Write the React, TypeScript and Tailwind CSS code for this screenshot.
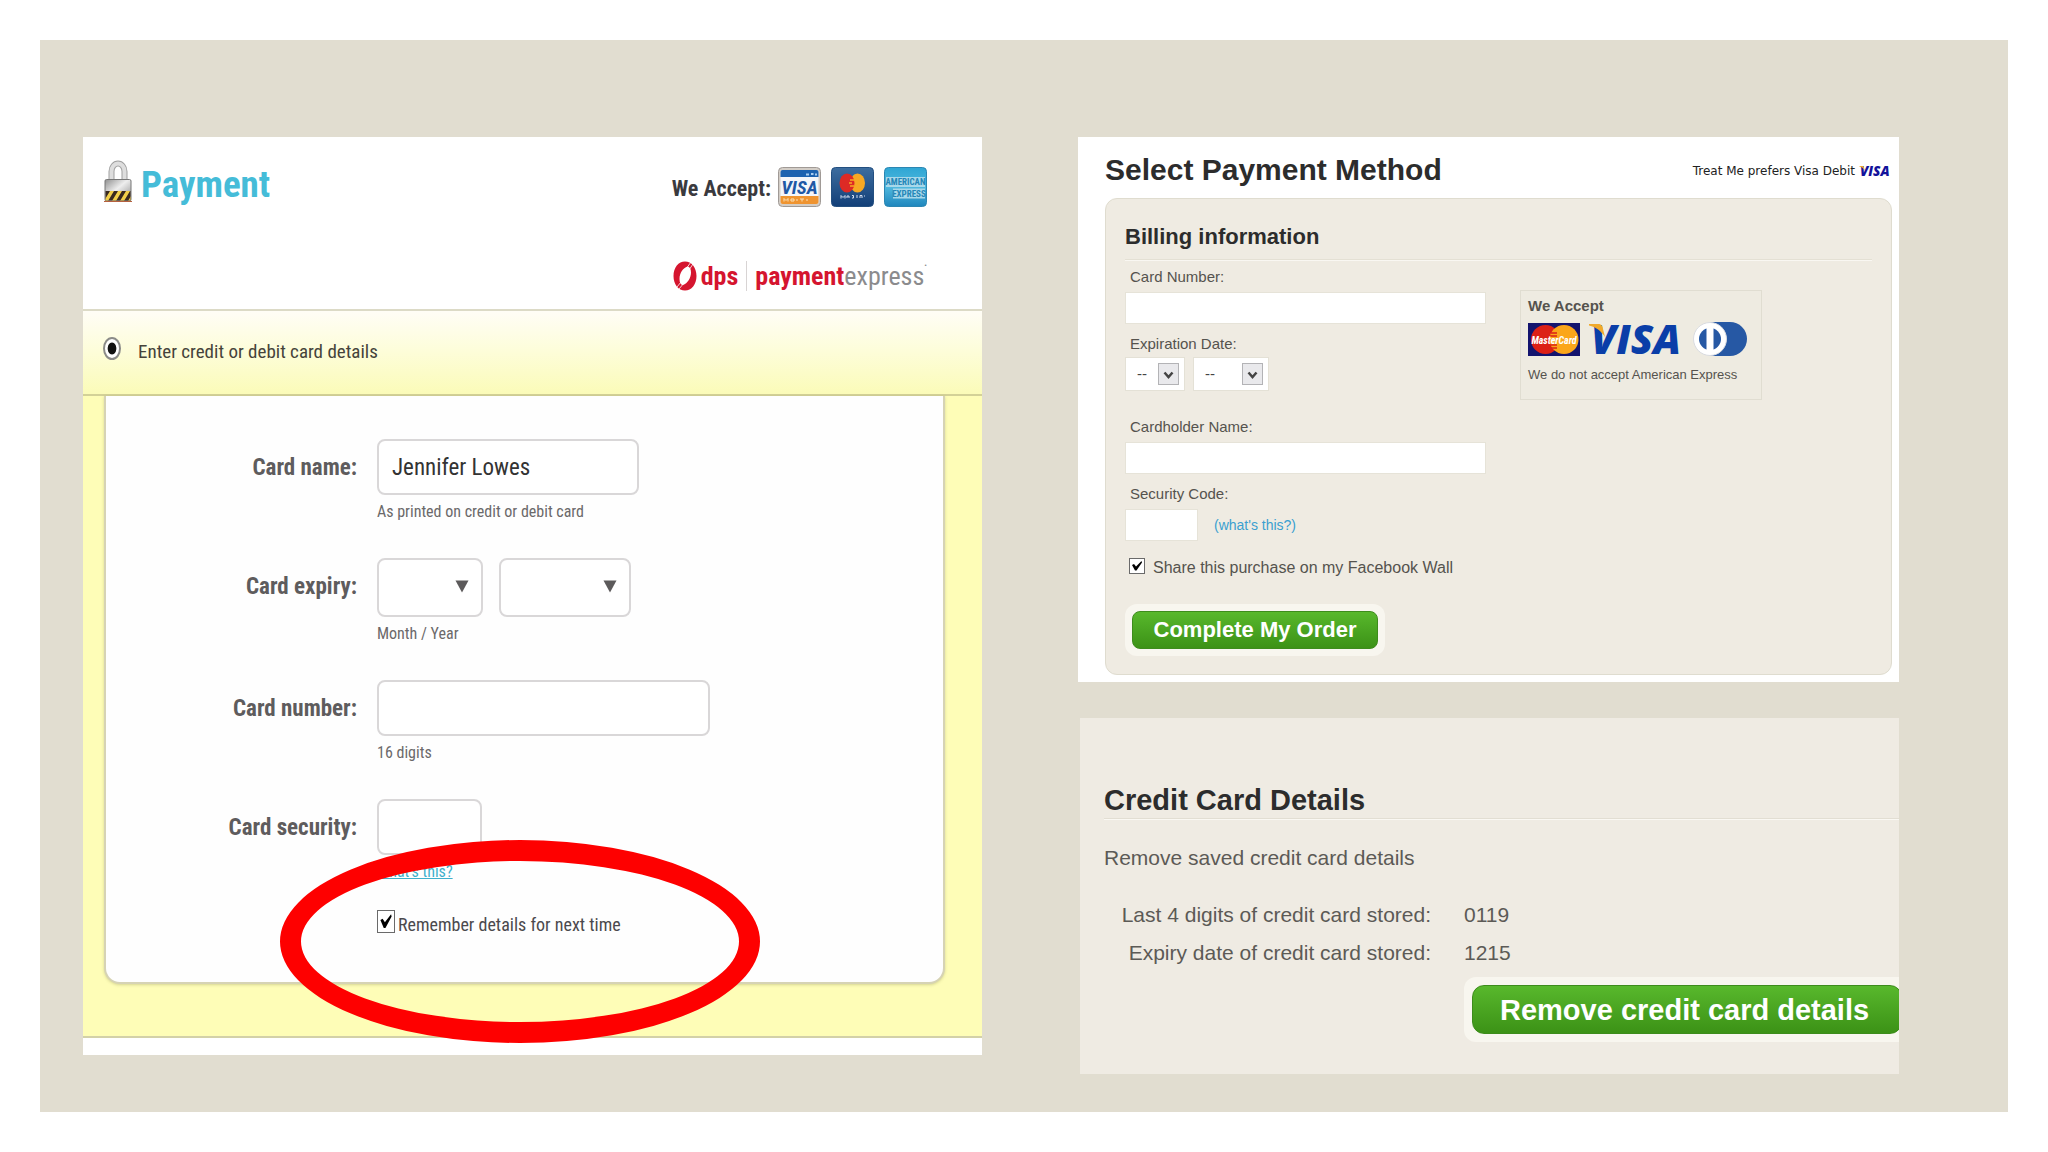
import React, { useState } from 'react'
import type { ReactNode } from 'react'

const narrow = "font-['Roboto_Condensed','Arial_Narrow','Liberation_Sans',sans-serif]"
const sans = "font-['Liberation_Sans',Arial,sans-serif]"

/* ---------- drawings ---------- */

function PadlockIcon() {
  return (
    <svg width="28" height="42" viewBox="0 0 28 42" aria-hidden="true">
      <defs>
        <linearGradient id="lockBody" x1="0" y1="0" x2="1" y2="1">
          <stop offset="0" stopColor="#8f8f8f" />
          <stop offset="0.45" stopColor="#eeeeee" />
          <stop offset="1" stopColor="#8a8a8a" />
        </linearGradient>
        <clipPath id="lockStripe">
          <rect x="1.5" y="31" width="25" height="9.5" />
        </clipPath>
      </defs>
      <path d="M7.500 22V11.500a6.500 8 0 0 1 13 0V22" fill="none" stroke="#a0a0a0" strokeWidth="6" />
      <path d="M7.500 22V11.500a6.500 8 0 0 1 13 0V22" fill="none" stroke="#dedede" strokeWidth="4" />
      <rect x="1" y="19.500" width="26" height="21.500" rx="1.500" fill="url(#lockBody)" stroke="#777" />
      <g clipPath="url(#lockStripe)">
        <rect x="1" y="31" width="26" height="10" fill="#3a2a20" />
        <path d="M0 41L6 31h4L4 41zM8 41l6-10h4l-6 10zM16 41l6-10h4l-6 10zM24 41l6-10h4l-6 10z" fill="#f2cf4a" />
      </g>
      <path d="M0 41.500h28" stroke="#b5603f" />
    </svg>
  )
}

function VisaCard() {
  return (
    <svg width="43" height="40" viewBox="0 0 43 40" role="img" aria-label="Visa">
      <defs>
        <clipPath id="visaClip">
          <rect x="2.500" y="3" width="38" height="34" rx="2" />
        </clipPath>
      </defs>
      <rect x="0.500" y="0.500" width="42" height="39" rx="4" fill="#d3cdc6" stroke="#a09a96" />
      <g clipPath="url(#visaClip)">
        <rect x="2" y="3" width="39" height="34" fill="#f4f6fa" />
        <rect x="2" y="3" width="39" height="7" fill="#1c62b0" />
        <rect x="2" y="29" width="39" height="8" fill="#ef9430" />
      </g>
      <path d="M28 7.500h3M33 7h2.500M37 7.500h2" stroke="#a9cdf0" strokeWidth="2" />
      <path d="M6 34.500v-3l2 2 2-2v3M13 34v-2h3v2zM19 34v-2M22 32h4M24 32v2.500M29 34v-2" stroke="#fbe0b4" fill="none" />
      <text x="21.500" y="27" textAnchor="middle" fontFamily="Roboto Condensed" fontWeight="700" fontStyle="italic" fontSize="19" fill="#2058a5">
        VISA
      </text>
    </svg>
  )
}

function MaestroCard() {
  return (
    <svg width="43" height="40" viewBox="0 0 43 40" role="img" aria-label="Mastercard">
      <defs>
        <linearGradient id="mcBlue" x1="0" y1="0" x2="0" y2="1">
          <stop offset="0" stopColor="#3d6d9f" />
          <stop offset="1" stopColor="#123f78" />
        </linearGradient>
      </defs>
      <rect x="0.500" y="0.500" width="42" height="39" rx="4" fill="url(#mcBlue)" stroke="#234f80" />
      <ellipse cx="26.500" cy="16" rx="7.500" ry="9.500" fill="#f7a823" />
      <ellipse cx="16" cy="16" rx="7.500" ry="9.500" fill="#dd2a25" />
      <path d="M19 13h4M18 16h3M19 19h4" stroke="#f7a823" strokeWidth="1.500" />
      <path d="M10 31.500v-3l2 2 2-2v3M16 31v-2h2v2M21 31h1.500v-2.500H21M26 31v-3M29 31v-2.500h2V31M33 29h1" stroke="#d3def0" fill="none" />
    </svg>
  )
}

function AmexCard() {
  return (
    <svg width="43" height="40" viewBox="0 0 43 40" role="img" aria-label="American Express">
      <defs>
        <linearGradient id="amexBlue" x1="0" y1="0" x2="0" y2="1">
          <stop offset="0" stopColor="#2fa6d4" />
          <stop offset="0.5" stopColor="#4fb8de" />
          <stop offset="1" stopColor="#1f86bd" />
        </linearGradient>
      </defs>
      <rect x="0.500" y="0.500" width="42" height="39" rx="4" fill="url(#amexBlue)" stroke="#2c86b2" />
      <rect x="2" y="10" width="39" height="10" fill="#a7d8ea" />
      <rect x="9" y="21.500" width="32" height="10" fill="#a7d8ea" />
      <text x="21.500" y="18" textAnchor="middle" fontFamily="Roboto Condensed" fontWeight="700" fontSize="9" fill="#2587b8">
        AMERICAN
      </text>
      <text x="25" y="30" textAnchor="middle" fontFamily="Roboto Condensed" fontWeight="700" fontSize="9" fill="#2587b8">
        EXPRESS
      </text>
    </svg>
  )
}

function DpsMark() {
  return (
    <svg width="24" height="30" viewBox="0 0 24 30" aria-hidden="true">
      <path
        fillRule="evenodd"
        d="M12 0.500C18.500 0.500 23.500 6.500 23.500 15S18.500 29.500 12 29.500 0.500 23.500 0.500 15 5.500 0.500 12 0.500zM14.500 5.500C10 7 6.500 12 6.500 18c0 4 1.500 6 3.500 6 4.500-1.500 8-7 8-12.500 0-4-1.500-6-3.500-6z"
        fill="#d5152f"
      />
      <path d="M13 8l5-7M16 9l4-6M11 22l-5 6M8 21l-4 5" stroke="#fff" strokeWidth="0.800" />
    </svg>
  )
}

function VisaWordmark({ large = false }: { large?: boolean }) {
  return (
    <svg
      className={large ? 'h-[36px] w-[97px]' : 'h-[12px] w-[32px]'}
      viewBox="0 0 97 36"
      role="img"
      aria-label="Visa"
    >
      <text x="3" y="33" fontFamily="Open Sans" fontWeight="800" fontStyle="italic" fontSize="41" fill={large ? '#0a3ea8' : '#12129a'}>
        VISA
      </text>
      <path d="M1 3h9c3 0 5 2 5 5l2 8C13 10 8 6 1 4.500z" fill="#f0a92c" />
    </svg>
  )
}

function MasterCardLogo() {
  return (
    <svg width="52" height="33" viewBox="0 0 52 33" role="img" aria-label="MasterCard">
      <rect width="52" height="33" fill="#13146e" />
      <circle cx="17.500" cy="16.500" r="14.500" fill="#dc2016" />
      <circle cx="36" cy="16.500" r="14.500" fill="#fba61a" />
      <path d="M23 10h6M22 13h7M22 22h7M23 25h6" stroke="#dc2016" strokeWidth="1.500" />
      <text x="26" y="20.500" textAnchor="middle" fontFamily="Roboto Condensed" fontWeight="700" fontStyle="italic" fontSize="10" fill="#fff">
        MasterCard
      </text>
    </svg>
  )
}

function DinersLogo() {
  return (
    <svg width="55" height="36" viewBox="0 0 55 36" role="img" aria-label="Diners Club">
      <path d="M17 1h20a17 17 0 0 1 0 34H17z" fill="#2658a4" />
      <circle cx="17" cy="18" r="16.500" fill="#fff" stroke="#d9dbe0" />
      <circle cx="17" cy="18" r="11" fill="#2658a4" />
      <rect x="13.500" y="6" width="7" height="24" fill="#fff" />
    </svg>
  )
}

/* ---------- controls ---------- */

function TickBox({ id, size }: { id: string; size: string }) {
  const [on, setOn] = useState(true)
  return (
    <span className={`relative inline-block shrink-0 ${size}`}>
      <input
        id={id}
        type="checkbox"
        checked={on}
        onChange={(e) => setOn(e.target.checked)}
        className="block h-full w-full appearance-none border border-[#6a6a6a] bg-white"
      />
      {on && (
        <svg className="pointer-events-none absolute inset-0 h-full w-full" viewBox="0 0 16 16" preserveAspectRatio="none" aria-hidden="true">
          <path d="M3 7l2-1 2 2.500L12.500 3l.5 1.500L7.500 12.500H6z" fill="#000" />
        </svg>
      )}
    </span>
  )
}

function ArrowSelect({ id, label, width }: { id: string; label: string; width: string }) {
  return (
    <span className={`relative inline-block ${width}`}>
      <select id={id} aria-label={label} className="block h-[59px] w-full appearance-none rounded-lg border-2 border-[#d9d7d8] bg-white px-3 text-[23px]">
        <option value=""></option>
      </select>
      <svg className="pointer-events-none absolute top-[22px] right-[14px]" width="14" height="13" viewBox="0 0 14 13" aria-hidden="true">
        <path d="M0.500 0.500h13L7 12.500z" fill="#5c5a5b" />
      </svg>
    </span>
  )
}

function DashSelect({ id, label, width }: { id: string; label: string; width: string }) {
  return (
    <span className={`relative inline-block ${width}`}>
      <select id={id} aria-label={label} className="block h-[34px] w-full appearance-none border border-[#e4e1d6] bg-white pl-[11px] text-[15px] text-[#444]">
        <option value="">--</option>
      </select>
      <svg className="pointer-events-none absolute top-[6px] right-[6px]" width="21" height="22" viewBox="0 0 21 22" aria-hidden="true">
        <rect x="0.500" y="0.500" width="20" height="21" fill="#e9e9ec" stroke="#b3b3b6" />
        <path d="M6.500 9.500l4 4.500 4-4.500" fill="none" stroke="#444" strokeWidth="2.500" />
      </svg>
    </span>
  )
}

function FieldRow({ id, label, children }: { id: string; label: string; children: ReactNode }) {
  return (
    <div className="grid grid-cols-[251px_1fr] gap-x-5">
      <label htmlFor={id} className="text-right text-[23px] leading-[57px] font-bold text-[#5e5c5d]">
        {label}
      </label>
      <div>{children}</div>
    </div>
  )
}

const bigInput = 'block rounded-lg border-2 border-[#d9d7d8] bg-white px-[13px] text-[23px] text-[#333] h-[56px]'
const help = 'mt-[7px] block text-[16px] leading-5 text-[#6b696a]'
const flatInput = 'block h-8 border border-[#e6e3d8] bg-white px-2 text-[15px]'
const flatLabel = 'block pl-[5px] text-[15px] leading-5 text-[#55534e]'

/* ---------- panels ---------- */

function PaymentPanel() {
  return (
    <section className={`relative self-start bg-white ${narrow}`}>
      <header className="h-[172px] pr-[55px] pl-[21px]">
        <div className="flex items-start justify-between">
          <h1 className="flex items-start gap-[9px] pt-[23px] text-[37px] leading-[46px] font-bold text-[#45bcd8]">
            <PadlockIcon />
            <span className="pt-[2px]">Payment</span>
          </h1>
          <div className="flex items-center pt-[30px]">
            <span className="pt-[3px] pr-[7px] text-[22px] leading-[37px] font-bold text-[#3a3a3e]">We Accept:</span>
            <span className="flex gap-[10px]">
              <VisaCard />
              <MaestroCard />
              <AmexCard />
            </span>
          </div>
        </div>
        <div className="mt-[52px] flex items-center justify-end text-[26px] leading-8">
          <DpsMark />
          <span className="pl-[4px] font-bold text-[#d5152f]">dps</span>
          <span className="mx-[8px] h-[30px] w-px bg-[#d8d4d4]" />
          <span className="font-bold text-[#d5152f]">payment</span>
          <span className="text-[#8b8b8d]">express</span>
          <span className="self-start text-[8px] leading-3 text-[#8b8b8d]">•</span>
        </div>
      </header>

      <div className="border-t-2 border-b-2 border-t-[#dcdac6] border-b-[#d3d197] bg-linear-to-b from-[#fffdf6] via-[#fdfdd8] to-[#fbfbb8]">
        <label className="flex h-[83px] items-center pb-2 pl-5 text-[19px] text-[#45433a]">
          <input
            type="radio"
            name="method"
            defaultChecked
            className="h-[23px] w-[18px] appearance-none rounded-[50%] border-2 border-[#8b8b88] bg-[radial-gradient(ellipse_at_center,#111_0,#111_40%,#fff_48%)]"
          />
          <span className="pt-2 pl-[17px]">Enter credit or debit card details</span>
        </label>
      </div>

      <div className="border-b-2 border-[#d3d1a8] bg-[#fefdb7] pr-[37px] pb-[52px] pl-[21px]">
        <form
          className="rounded-b-2xl border-2 border-t-0 border-[#d6d3b4] bg-[#fefefe] pt-[43px] pb-[45px] shadow-[0_1px_3px_rgba(90,90,40,0.25)]"
          onSubmit={(e) => e.preventDefault()}
        >
          <div className="flex flex-col gap-9">
            <FieldRow id="card-name" label="Card name:">
              <input id="card-name" type="text" defaultValue="Jennifer Lowes" className={`${bigInput} w-[262px]`} />
              <span className={help}>As printed on credit or debit card</span>
            </FieldRow>
            <FieldRow id="card-month" label="Card expiry:">
              <div className="flex gap-4">
                <ArrowSelect id="card-month" label="Expiry month" width="w-[106px]" />
                <ArrowSelect id="card-year" label="Expiry year" width="w-[132px]" />
              </div>
              <span className={help}>Month / Year</span>
            </FieldRow>
            <FieldRow id="card-number" label="Card number:">
              <input id="card-number" type="text" className={`${bigInput} w-[333px]`} />
              <span className={help}>16 digits</span>
            </FieldRow>
            <FieldRow id="card-security" label="Card security:">
              <input id="card-security" type="text" className={`${bigInput} w-[105px]`} />
              <a href="#security" className="mt-[7px] block w-fit text-[16px] leading-5 text-[#3fb0cc] underline">
                What's this?
              </a>
              <div className="mt-[28px] flex items-start">
                <TickBox id="remember" size="h-[23px] w-[18px]" />
                <label htmlFor="remember" className="pt-[3px] pl-[3px] text-[18px] leading-6 text-[#4b494d]">
                  Remember details for next time
                </label>
              </div>
            </FieldRow>
          </div>
        </form>
      </div>
      <div className="h-[17px]" />

      <div className="pointer-events-none absolute top-[703px] left-[197px] h-[203px] w-[480px] rounded-[50%] border-[21px] border-[#fe0000]" />
    </section>
  )
}

function SelectPaymentPanel() {
  return (
    <section className="bg-white pr-[7px] pb-[7px] pl-[27px]">
      <header className="flex h-[61px] items-center justify-between pt-1">
        <h2 className="text-[30px] leading-9 font-bold text-[#2c2c2c]">Select Payment Method</h2>
        <p className="flex items-center gap-1 pt-[3px] pr-[1px] font-['DejaVu_Sans',Verdana,sans-serif] text-[12px] text-[#222]">
          Treat Me prefers Visa Debit
          <VisaWordmark />
        </p>
      </header>
      <form
        className="rounded-xl border border-[#dfdccf] bg-[#efebe2] px-[19px] pt-[26px] pb-[18px]"
        onSubmit={(e) => e.preventDefault()}
      >
        <h3 className="border-b border-[#e4e0d4] pb-[10px] text-[22px] leading-6 font-bold text-[#2c2c2c]">Billing information</h3>
        <div className="flex items-start gap-[34px] border-t border-[#f9f7f2]">
          <div className="w-[361px]">
            <label htmlFor="number" className={`${flatLabel} mt-[6px]`}>Card Number:</label>
            <input id="number" type="text" className={`${flatInput} mt-[5px] w-full`} />
            <label htmlFor="exp-month" className={`${flatLabel} mt-[10px]`}>Expiration Date:</label>
            <div className="mt-[3px] flex gap-2">
              <DashSelect id="exp-month" label="Expiration month" width="w-[60px]" />
              <DashSelect id="exp-year" label="Expiration year" width="w-[76px]" />
            </div>
            <label htmlFor="holder" className={`${flatLabel} mt-[26px]`}>Cardholder Name:</label>
            <input id="holder" type="text" className={`${flatInput} mt-[5px] w-full`} />
            <label htmlFor="code" className={`${flatLabel} mt-[10px]`}>Security Code:</label>
            <div className="mt-[5px] flex items-center gap-4">
              <input id="code" type="text" className={`${flatInput} w-[73px]`} />
              <a href="#code-help" className="text-[14px] text-[#3a9fd0]">(what's this?)</a>
            </div>
            <div className="mt-[13px] flex items-center pl-1">
              <TickBox id="share" size="h-4 w-4" />
              <label htmlFor="share" className="pt-1 pl-[8px] text-[16px] leading-5 whitespace-nowrap text-[#55534e]">
                Share this purchase on my Facebook Wall
              </label>
            </div>
            <div className="mt-[26px] w-fit rounded-xl bg-[#f8f6ef] p-[7px]">
              <button
                type="submit"
                className="block h-[38px] w-[246px] rounded-lg border border-[#3d8c1c] bg-linear-to-b from-[#58b82c] to-[#3c9216] text-[22px] leading-8 font-bold text-white"
              >
                Complete My Order
              </button>
            </div>
          </div>
          <aside className="mt-[29px] h-[110px] w-[242px] border border-[#e0ddd1] bg-[#eeebe1] px-[7px] pt-[5px]">
            <h4 className="text-[15px] leading-5 font-bold text-[#55534e]">We Accept</h4>
            <div className="mt-[5px] flex items-center gap-2">
              <MasterCardLogo />
              <VisaWordmark large />
              <DinersLogo />
            </div>
            <p className="mt-[8px] text-[13px] leading-5 whitespace-nowrap text-[#55534e]">We do not accept American Express</p>
          </aside>
        </div>
      </form>
    </section>
  )
}

function SavedCardPanel() {
  return (
    <section className="mt-9 ml-[2px] overflow-hidden bg-[#efebe3] pt-16 pb-[32px] pl-6">
      <h2 className="border-b border-[#e2ded3] text-[29px] leading-9 font-bold text-[#2c2c2c]">Credit Card Details</h2>
      <p className="border-t border-[#faf8f3] pt-[24px] text-[21px] leading-7 text-[#5c5a56]">Remove saved credit card details</p>
      <table className="mt-[24px] text-[21px] leading-[38px] text-[#5c5a56]">
        <tbody>
          <tr>
            <th scope="row" className="w-[327px] p-0 text-right font-normal">Last 4 digits of credit card stored:</th>
            <td className="p-0 pl-[33px]">0119</td>
          </tr>
          <tr>
            <th scope="row" className="w-[327px] p-0 text-right font-normal">Expiry date of credit card stored:</th>
            <td className="p-0 pl-[33px]">1215</td>
          </tr>
        </tbody>
      </table>
      <div className="mt-[5px] ml-[360px] w-max rounded-xl bg-[#f8f6ef] p-2">
        <button
          type="button"
          className="block h-[49px] w-[430px] rounded-xl border border-[#3d8c1c] bg-linear-to-b from-[#58b82c] to-[#3c9216] pl-[27px] text-left text-[29px] leading-[44px] font-bold whitespace-nowrap text-white"
        >
          Remove credit card details
        </button>
      </div>
    </section>
  )
}

export default function App() {
  return (
    <div className={`flex min-h-screen bg-white p-10 ${sans}`}>
      <main className="grid flex-1 grid-cols-[899fr_821fr] items-start gap-x-24 bg-[#e1ddd0] pt-[97px] pr-[109px] pb-[38px] pl-[43px]">
        <PaymentPanel />
        <div className="min-w-0">
          <SelectPaymentPanel />
          <SavedCardPanel />
        </div>
      </main>
    </div>
  )
}
